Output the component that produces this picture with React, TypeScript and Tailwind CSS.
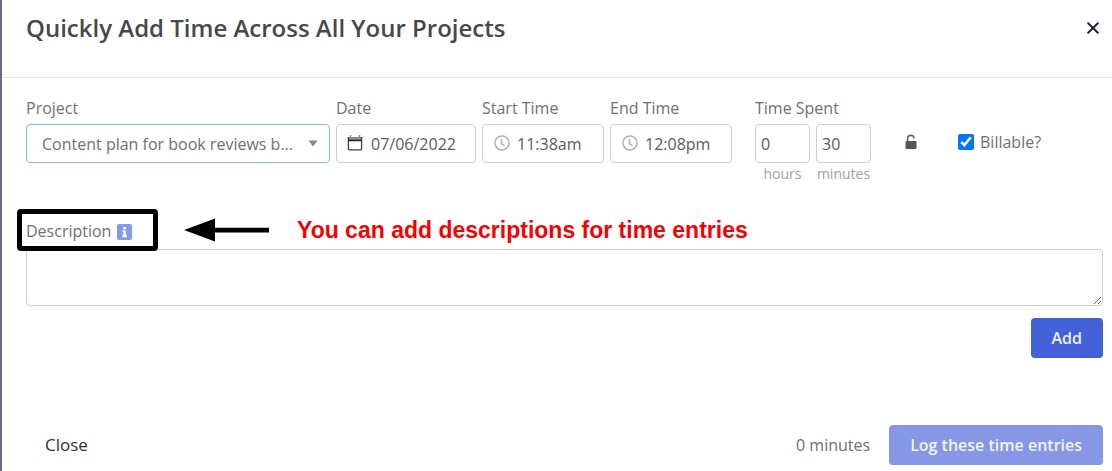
import { useState } from "react";

const inputClass =
  "h-[39px] w-full rounded border border-[#d0d0d0] bg-white text-base text-[#5c5c5c] outline-none";

function ClockIcon() {
  return (
    <svg viewBox="0 0 16 16" className="pointer-events-none absolute left-3 top-[11px] size-4" fill="none" stroke="#b0b0b0" strokeWidth="1.5">
      <circle cx="8" cy="8" r="7" />
      <path d="M7.5 4v4.5l3 2" />
    </svg>
  );
}

function CalendarIcon() {
  return (
    <svg viewBox="0 0 16 16" className="pointer-events-none absolute left-[11px] top-[11px] size-4" fill="none">
      <path d="M1.5 2h13v3h-13z" fill="#8a8b94" />
      <path d="M3.5 0v2M12.5 0v2" stroke="#8a8b94" strokeWidth="1.5" />
      <path d="M1.2 5.5h13.6" stroke="#1c1c30" strokeWidth="1.5" />
      <path d="M1.4 2v12q0 .8.8.8h11.6q.8 0 .8-.8V2" stroke="#3a3a4c" strokeWidth="1.3" />
    </svg>
  );
}

function LockIcon() {
  return (
    <svg viewBox="0 0 12 16" className="h-4 w-3" fill="none">
      <path d="M2.6 7V4.6a3.2 3.2 0 0 1 6.4 0" stroke="#666" strokeWidth="1.6" />
      <rect x="0.5" y="7" width="11" height="8" rx="1" fill="#555" />
    </svg>
  );
}

export default function App() {
  const [project, setProject] = useState("book-reviews");
  const [date, setDate] = useState("07/06/2022");
  const [start, setStart] = useState("11:38am");
  const [end, setEnd] = useState("12:08pm");
  const [hours, setHours] = useState("0");
  const [minutes, setMinutes] = useState("30");
  const [billable, setBillable] = useState(true);
  const [description, setDescription] = useState("");

  return (
    <div className="min-h-screen border-l-2 border-[#6c6e82] bg-white font-['Open_Sans','Noto_Sans',sans-serif] text-base text-[#707070]">
      <header className="flex h-[78px] items-start justify-between border-b border-[#e4e7f0] pl-6 pr-[11px] pt-3">
        <h1 className="text-2xl leading-8 font-semibold text-[#484848]">
          Quickly Add Time Across All Your Projects
        </h1>
        <button type="button" aria-label="Close dialog" className="grid h-8 w-4 place-items-center">
          <svg viewBox="0 0 12 12" className="size-3" stroke="#23243a" strokeWidth="2" strokeLinecap="round">
            <path d="M1.2 1.2l9.6 9.6M10.8 1.2l-9.6 9.6" />
          </svg>
        </button>
      </header>

      <form onSubmit={(e) => e.preventDefault()} className="pl-6 pr-[9px] pt-[18px]">
        <div className="flex items-start gap-[6px]">
          <div className="w-[304px]">
            <label htmlFor="project" className="block h-7 leading-6">Project</label>
            <div className="relative">
              <select
                id="project"
                value={project}
                onChange={(e) => setProject(e.target.value)}
                className="h-[39px] w-full appearance-none rounded border border-[#80b8fb] bg-white pl-[15px] pr-8 text-base text-[#707070] outline-none"
              >
                <option value="book-reviews">Content plan for book reviews b...</option>
              </select>
              <svg viewBox="0 0 10 7" className="pointer-events-none absolute right-3 top-4 h-[7px] w-[10px]" fill="#888">
                <path d="M0.5 0.5h9L5 6.5z" />
              </svg>
            </div>
          </div>
          <div className="w-[140px]">
            <label htmlFor="date" className="block h-7 leading-6">Date</label>
            <div className="relative">
              <input id="date" value={date} onChange={(e) => setDate(e.target.value)} className={`${inputClass} pl-[34px]`} />
              <CalendarIcon />
            </div>
          </div>
          <div className="w-[122px]">
            <label htmlFor="start" className="block h-7 leading-6">Start Time</label>
            <div className="relative">
              <input id="start" value={start} onChange={(e) => setStart(e.target.value)} className={`${inputClass} pl-[34px]`} />
              <ClockIcon />
            </div>
          </div>
          <div className="w-[122px]">
            <label htmlFor="end" className="block h-7 leading-6">End Time</label>
            <div className="relative">
              <input id="end" value={end} onChange={(e) => setEnd(e.target.value)} className={`${inputClass} pl-[34px]`} />
              <ClockIcon />
            </div>
          </div>
          <fieldset className="ml-[17px]">
            <legend className="block h-7 leading-6">Time Spent</legend>
            <div className="flex gap-[6px]">
              <div className="w-[55px]">
                <input id="hours" value={hours} onChange={(e) => setHours(e.target.value)} className={`${inputClass} pl-[5px]`} />
                <label htmlFor="hours" className="block text-center text-sm leading-[22px] text-[#a0a0a0]">hours</label>
              </div>
              <div className="w-[55px]">
                <input id="minutes" value={minutes} onChange={(e) => setMinutes(e.target.value)} className={`${inputClass} pl-[5px]`} />
                <label htmlFor="minutes" className="block text-center text-sm leading-[22px] text-[#a0a0a0]">minutes</label>
              </div>
            </div>
          </fieldset>
          <button type="button" aria-label="Unlock time" className="mt-7 ml-7 grid h-9 w-3 place-items-center">
            <LockIcon />
          </button>
          <label className="mt-7 ml-[35px] flex h-9 items-center gap-[6px]">
            <input
              type="checkbox"
              checked={billable}
              onChange={(e) => setBillable(e.target.checked)}
              className="size-4 accent-[#0075ff]"
            />
            Billable?
          </label>
        </div>

        <div className="mt-[30px]">
          <div className="relative flex h-[34px] items-start gap-[6px] pt-1">
            <label htmlFor="description">Description</label>
            <svg viewBox="0 0 15 16" className="mt-[5px] h-4 w-[15px]" aria-label="Info">
              <rect width="15" height="16" rx="2" fill="#869be6" />
              <path d="M6.3 3h2.6v2.2H6.3zM5.4 6.4h3.5v5.2h1v1.6H5.2v-1.6h1.1V8H5.4z" fill="#fff" />
            </svg>
            {/* callout */}
            <div className="pointer-events-none absolute -left-[9px] -top-[6px] flex items-center">
              <div className="h-[42px] w-[141px] rounded-sm border-5 border-black" />
              <svg viewBox="0 0 86 24" className="ml-[26px] h-6 w-[86px]">
                <path d="M0 12L31 .5V9.8h54v4.6H31v9z" fill="#000" />
              </svg>
              <p className="ml-[27px] whitespace-nowrap font-['Liberation_Sans',Arial,sans-serif] text-[23px] leading-8 font-bold text-[#f90000]">
                You can add descriptions for time entries
              </p>
            </div>
          </div>
          <textarea
            id="description"
            value={description}
            onChange={(e) => setDescription(e.target.value)}
            className="block h-[57px] w-full resize-y rounded border border-[#d0d0d0] p-2 outline-none"
          />
        </div>

        <div className="mt-3 flex justify-end">
          <button type="submit" className="h-10 rounded bg-[#4361d8] px-[21px] font-semibold text-[#eef1ff]">
            Add
          </button>
        </div>
      </form>

      <footer className="mt-[67px] flex items-center justify-between pb-[5px] pl-[43px] pr-[9px]">
        <button type="button" className="text-[17px] text-[#2f3040]">Close</button>
        <div className="flex items-center gap-[19px]">
          <span>0 minutes</span>
          <button type="button" disabled className="h-10 rounded bg-[#8698e5] px-[21px] font-semibold text-[#f2f4ff]">
            Log these time entries
          </button>
        </div>
      </footer>
    </div>
  );
}
